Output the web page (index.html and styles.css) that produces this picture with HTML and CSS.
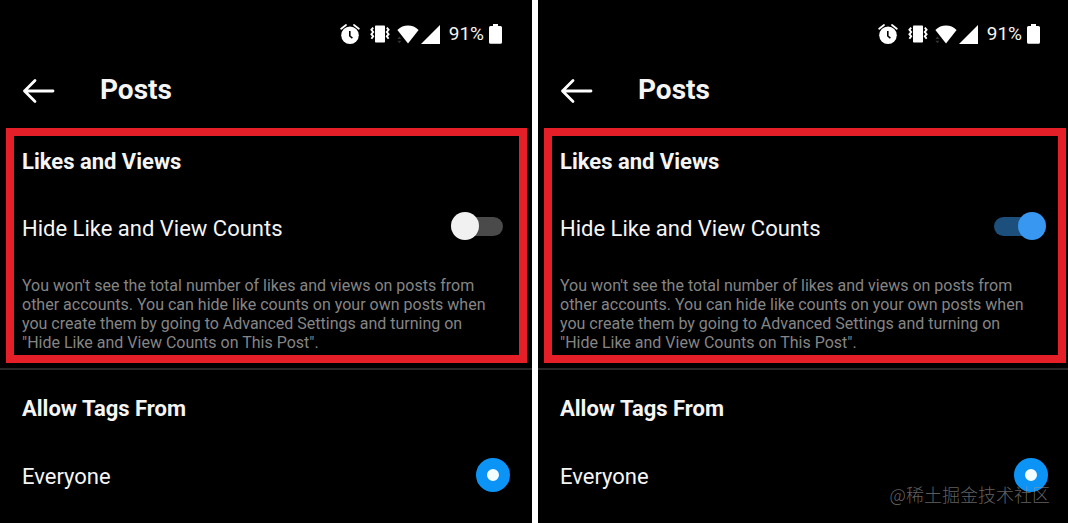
FILE: index.html
```html
<!DOCTYPE html>
<html lang="en">
<head>
<meta charset="utf-8">
<meta name="viewport" content="width=device-width, initial-scale=1">
<title>Posts</title>
<link rel="stylesheet" href="styles.css">
</head>
<body>
<svg class="sprite" aria-hidden="true">
  <symbol id="alarm" viewBox="0 0 20 20">
    <circle cx="10" cy="11.200" r="8.800" fill="#fff"/>
    <path d="M1.200 4.800 6 1M18.800 4.800 14 1" fill="none" stroke="#fff" stroke-width="1.800" stroke-linecap="round"/>
    <path d="M9.800 7v5l2.600 2.200" fill="none" stroke="#000" stroke-width="1.600"/>
  </symbol>
  <symbol id="vibrate" viewBox="0 0 20 18">
    <rect x="5" y="0.500" width="10" height="17" rx="0.800" fill="#fff"/>
    <path d="M3.200 2.600 1.400 4.800 3.200 7 1.400 9.200 3.200 11.400 1.400 13.800M16.800 2.600 18.600 4.800 16.800 7 18.600 9.200 16.800 11.400 18.600 13.800" fill="none" stroke="#fff" stroke-width="1.900"/>
  </symbol>
  <symbol id="wifi" viewBox="0 0 22 19">
    <path d="M.4 5Q5 .6 11 .6T21.600 5L11 18.600Z" fill="#fff"/>
    <path d="m.4 14 2-2.400 2 2.400Zm0 1.800 2 2.400 2-2.400Z" fill="#333"/>
  </symbol>
  <symbol id="signal" viewBox="0 0 19 19">
    <path d="M0 19 19 0v19Z" fill="#fff"/>
  </symbol>
  <symbol id="battery" viewBox="0 0 13 20">
    <path d="M4 0h5v2h2.500q1.500 0 1.500 1.500v14.800q0 1.500-1.500 1.500h-10q-1.500 0-1.500-1.500V3.500Q0 2 1.500 2H4Z" fill="#fff"/>
  </symbol>
  <symbol id="back" viewBox="0 0 34 26">
    <path d="M31 13H2.500M13 2.500 2.500 13 13 23.500" fill="none" stroke="#fff" stroke-width="2.800" stroke-linecap="round" stroke-linejoin="round"/>
  </symbol>
</svg>
<main class="compare">
  <section class="phone phone-off">
    <div class="status">
      <svg class="i-alarm"><use href="#alarm"/></svg>
      <svg class="i-vibrate"><use href="#vibrate"/></svg>
      <svg class="i-wifi"><use href="#wifi"/></svg>
      <svg class="i-signal"><use href="#signal"/></svg>
      <span class="percent">91%</span>
      <svg class="i-battery"><use href="#battery"/></svg>
    </div>
    <header class="bar">
      <button class="back" type="button" aria-label="Back"><svg><use href="#back"/></svg></button>
      <h1 class="title">Posts</h1>
    </header>
    <div class="highlight">
      <h2 class="heading">Likes and Views</h2>
      <div class="row">
        <label for="hide-off">Hide Like and View Counts</label>
        <input class="switch" id="hide-off" type="checkbox">
      </div>
      <p class="note">You won't see the total number of likes and views on posts from other accounts. You can hide like counts on your own posts when you create them by going to Advanced Settings and turning on "Hide Like and View Counts on This Post".</p>
    </div>
    <div class="tags">
      <h2 class="heading">Allow Tags From</h2>
      <div class="row">
        <label for="everyone-off">Everyone</label>
        <input class="radio" id="everyone-off" name="tags-off" type="radio" checked>
      </div>
    </div>
  </section>
  <section class="phone phone-on">
    <div class="status">
      <svg class="i-alarm"><use href="#alarm"/></svg>
      <svg class="i-vibrate"><use href="#vibrate"/></svg>
      <svg class="i-wifi"><use href="#wifi"/></svg>
      <svg class="i-signal"><use href="#signal"/></svg>
      <span class="percent">91%</span>
      <svg class="i-battery"><use href="#battery"/></svg>
    </div>
    <header class="bar">
      <button class="back" type="button" aria-label="Back"><svg><use href="#back"/></svg></button>
      <h1 class="title">Posts</h1>
    </header>
    <div class="highlight">
      <h2 class="heading">Likes and Views</h2>
      <div class="row">
        <label for="hide-on">Hide Like and View Counts</label>
        <input class="switch" id="hide-on" type="checkbox" checked>
      </div>
      <p class="note">You won't see the total number of likes and views on posts from other accounts. You can hide like counts on your own posts when you create them by going to Advanced Settings and turning on "Hide Like and View Counts on This Post".</p>
    </div>
    <div class="tags">
      <h2 class="heading">Allow Tags From</h2>
      <div class="row">
        <label for="everyone-on">Everyone</label>
        <input class="radio" id="everyone-on" name="tags-on" type="radio" checked>
      </div>
    </div>
  </section>
  <div class="watermark" lang="zh">@稀土掘金技术社区</div>
</main>
</body>
</html>
```
FILE: styles.css
```css
* { box-sizing: border-box; }
body {
  margin: 0;
  background: #fff;
  color: #f5f5f5;
  font-family: Roboto, "Liberation Sans", sans-serif;
}
h1, h2, p { margin: 0; }
svg { display: block; }
.sprite { position: absolute; width: 0; height: 0; }
.compare {
  position: relative;
  display: grid;
  grid-template-columns: 532fr 530fr;
  gap: 6px;
  min-height: 100vh;
}
.phone {
  background: #000;
  display: flex;
  flex-direction: column;
}
.status {
  display: flex;
  justify-content: flex-end;
  align-items: center;
  height: 68px;
  padding-right: 30px;
}
.phone-on .status { padding-right: 28px; }
.i-alarm { width: 20px; height: 20px; margin-right: 10px; }
.i-vibrate { width: 20px; height: 18px; margin-right: 7px; }
.i-wifi { width: 22px; height: 19px; margin-right: 2px; }
.i-signal { width: 19px; height: 19px; margin-right: 9px; }
.i-battery { width: 13px; height: 20px; }
.percent { font-size: 19px; line-height: 24px; margin-right: 5px; }
.bar {
  display: flex;
  align-items: center;
  height: 60px;
  padding: 0 22px 14px;
}
.back {
  padding: 0;
  border: 0;
  background: none;
  margin-right: 44px;
}
.back svg { width: 34px; height: 26px; }
.title { font-size: 28px; line-height: 34px; padding-bottom: 2px; font-weight: 700; }
.highlight {
  margin: 0 5px 5px 6px;
  border: 8px solid #e51f28;
  padding: 12px 16px 3px 8px;
}
.phone-on .highlight { margin-right: 2px; padding-right: 12px; }
.heading { font-size: 22px; line-height: 28px; font-weight: 700; }
.row {
  display: flex;
  align-items: center;
  justify-content: space-between;
  font-size: 22px;
  line-height: 30px;
}
.highlight .row { height: 30px; margin: 38px 0 32px; }
.note { padding-right: 8px; font-size: 16px; line-height: 19px; color: #858585; }
.switch {
  appearance: none;
  position: relative;
  flex: none;
  width: 52px;
  height: 28px;
  margin: 0 0 6px;
}
.switch::before,
.switch::after {
  content: "";
  position: absolute;
}
.switch::before {
  left: 12px;
  right: 0;
  top: 5px;
  height: 19px;
  border-radius: 10px;
  background: #4a4a4a;
}
.switch::after {
  left: 0;
  top: 0;
  width: 28px;
  height: 28px;
  border-radius: 50%;
  background: #f1f1f1;
}
.switch:checked::before { left: 0; right: 12px; background: #1c4f7c; }
.switch:checked::after { left: auto; right: 0; background: #3897f0; }
.tags {
  border-top: 2px solid #262626;
  padding: 25px 22px 0;
}
.phone-on .tags { padding-right: 20px; }
.tags .row { margin-top: 35px; height: 34px; }
.tags label { padding-top: 4px; }
.radio {
  appearance: none;
  width: 34px;
  height: 34px;
  margin: 0;
  border: 11px solid #0b93f6;
  border-radius: 50%;
  background: #f4fdff;
}
.watermark {
  position: absolute;
  right: 18px;
  bottom: 17px;
  color: rgba(150, 150, 150, 0.65);
  font-family: "Noto Sans CJK SC", sans-serif;
  font-weight: 300;
  font-size: 18px;
  line-height: 24px;
}
```
